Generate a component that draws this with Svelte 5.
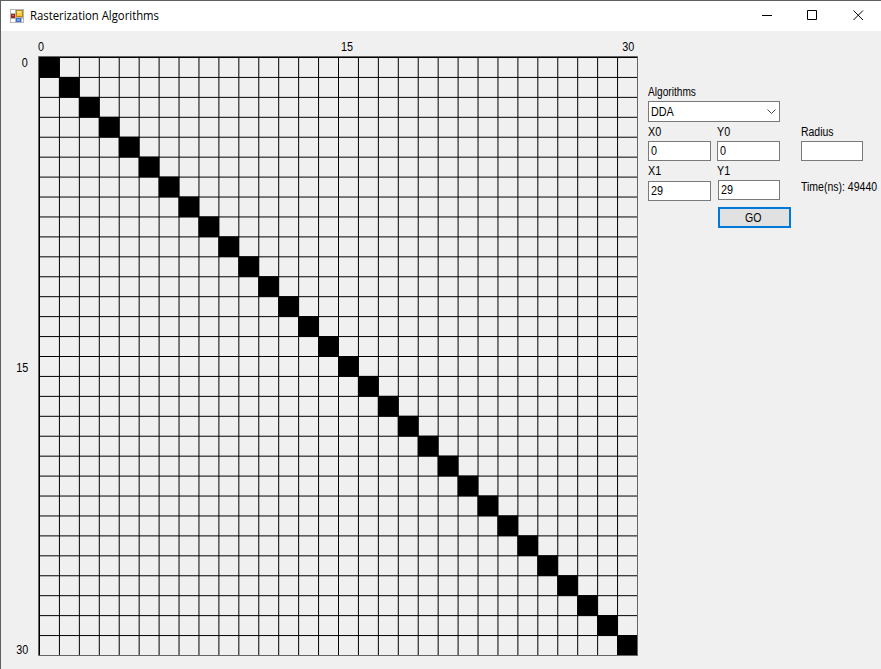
<script>
  const count = 30;
  const step = 598 / count;
  const indices = Array.from({ length: count }, (_, i) => i);
  let algorithm = 'DDA';
  let x0 = '0';
  let y0 = '0';
  let x1 = '29';
  let y1 = '29';
  let radius = '';
</script>

<div class="window">
  <header>
    <svg class="logo" width="14" height="14" viewBox="0 0 14 14" shape-rendering="crispEdges">
      <path fill="#b5b5b5" d="M0 0h14v14H0z" />
      <path fill="#fff" d="M1 1h4v3H1zM1 10h4v3H1zM12 10h1v3h-1z" />
      <path fill="#a3241c" d="M1 5h4v4H1z" />
      <path fill="#d9634e" d="M2 6h2v1H2z" />
      <path fill="#b98413" d="M6 1h7v7H6z" />
      <path fill="#f8cb3c" d="M7 2h5v5H7z" />
      <path fill="#fde48c" d="M7 2h4v2H7z" />
      <path fill="#3c70c8" d="M6 9h5v4H6z" />
      <path fill="#73a6ee" d="M7 10h3v2H7z" />
    </svg>
    <h1><span>Rasterization Algorithms</span></h1>
    <nav>
      <button aria-label="Minimize"><svg width="11" height="11"><path d="M0 5.5h10" /></svg></button>
      <button aria-label="Maximize"><svg width="11" height="11"><path d="M.5.5h9v9h-9z" /></svg></button>
      <button aria-label="Close"><svg width="11" height="11"><path d="M.5.5l9.500 9.500M10 .5L.5 10" /></svg></button>
    </nav>
  </header>

  <main>
    <div class="rows"><span>0</span><span>15</span><span>30</span></div>
    <section class="plot">
      <div class="cols"><span>0</span><span>15</span><span>30</span></div>
      <svg class="grid" width="600" height="600" viewBox="0 0 600 600">
        {#each indices as i}
          <path class="line" d="M{1.5 + i * step} 1V599M1 {1.5 + i * step}H599" />
        {/each}
        {#each indices as i}
          <rect x={1 + i * step} y={1 + i * step} width="20.6" height="20.6" />
        {/each}
        <path class="frame" d="M.5.5h599v599H.5z" />
      </svg>
    </section>

    <form onsubmit={(e) => e.preventDefault()}>
      <label class="algo"><span class="cap name">Algorithms</span>
        <span class="combo"><span>{algorithm}</span>
          <svg width="9" height="6"><path d="M.5.5l4 4 4-4" /></svg>
        </span>
      </label>
      <div class="fields">
        <div class="col a">
          <label><span class="cap">X0</span><span class="box"><span>{x0}</span></span></label>
          <label class="second"><span class="cap">X1</span><span class="box"><span>{x1}</span></span></label>
        </div>
        <div class="col b">
          <label><span class="cap">Y0</span><span class="box"><span>{y0}</span></span></label>
          <label class="second"><span class="cap">Y1</span><span class="box"><span>{y1}</span></span></label>
          <button class="go"><span>GO</span></button>
        </div>
        <div class="col c">
          <label><span class="cap radius">Radius</span><span class="box"><span>{radius}</span></span></label>
          <span class="cap time">Time(ns): 49440</span>
        </div>
      </div>
    </form>
  </main>
</div>

<style>
  :global(body) { margin: 0; overflow: hidden; }
  .window {
    box-sizing: border-box; width: 881px; height: 669px; overflow: hidden;
    border-top: 1px solid #5f5f5f; border-left: 1px solid #5f5f5f;
    background: #f0f0f0; color: #000;
    font: 12px/14px "Liberation Sans", Arial, sans-serif;
  }
  span { white-space: nowrap; }
  header { display: flex; height: 30px; background: #fff; align-items: center; }
  .logo { margin: 0 0 1px 9px; }
  h1 { flex: 1; margin: 0 0 0 6px; font: 12px/16px "Open Sans", "Noto Sans", sans-serif; }
  h1 span { display: inline-block; transform: scaleX(.943); transform-origin: 0 50%; }
  nav { display: flex; }
  nav button {
    width: 45.500px; height: 30px; padding: 0 0 1px; border: 0; background: none;
    display: flex; align-items: center; justify-content: center;
  }
  nav path { fill: none; stroke: #000; }
  main { display: flex; height: 638px; }
  .rows, .cols { display: flex; justify-content: space-between; }
  .rows { flex: none; flex-direction: column; box-sizing: border-box; width: 37px; height: 626px; padding: 25px 10px 0 0; align-items: flex-end; }
  .rows span { transform: scaleX(.9); transform-origin: 100% 50%; }
  .rows span:nth-child(2) { margin-top: 22px; }
  .plot { width: 600px; flex: none; }
  .cols { padding: 9px 4px 2px 0; height: 14px; }
  .cols span { transform: scaleX(.9); transform-origin: 0 50%; }
  .cols span:last-child { transform-origin: 100% 50%; }
  .cols span:nth-child(2) { margin-left: 31px; }
  .grid { display: block; }
  .line { stroke: #000; fill: none; }
  .frame { stroke: #646464; fill: none; }
  form { flex: none; padding: 54px 0 0 10px; width: 233px; box-sizing: border-box; }
  label { display: block; }
  .cap { display: block; height: 14px; transform: scaleX(.9); transform-origin: 0 50%; }
  .cap.name { transform: scaleX(.845); }
  .cap.radius { transform: scaleX(.87); }
  .cap.time { transform: scaleX(.875); margin-top: 19px; }
  .combo, .box { display: flex; box-sizing: border-box; align-items: center; background: #fff; border: 1px solid #7a7a7a; padding-left: 2px; }
  .combo span, .box span { transform: scaleX(.9); transform-origin: 0 50%; }
  .combo { width: 132px; height: 21px; margin-top: 2px; justify-content: space-between; padding-right: 3px; }
  .combo path { fill: none; stroke: #444; }
  .fields { display: flex; padding-top: 3px; }
  .col { flex: none; }
  .box { height: 20px; margin-top: 2px; width: 63px; }
  .a { width: 69px; }
  .b { width: 84px; }
  .c { width: 70px; }
  .second { margin-top: 3px; }
  .a .second .box { margin-top: 3px; }
  .b .second .box { margin-left: 1px; width: 62px; }
  .c .box { width: 62px; }
  .go {
    display: block; margin: 7px 0 0 1px; width: 73px; height: 21px; padding: 0 2px 0 0;
    border: 2px solid #0078d7; background: #e1e1e1; color: #000; font: inherit;
  }
  .go span { display: inline-block; transform: scaleX(.88); }
</style>
